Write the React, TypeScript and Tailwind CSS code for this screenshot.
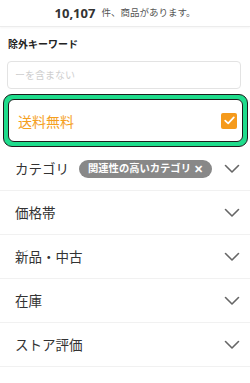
import React from 'react';

const rows = ['価格帯', '新品・中古', '在庫', 'ストア評価'];

function Chevron() {
  return (
    <svg width="16" height="10" viewBox="0 0 16 10" className="shrink-0">
      <path d="M1.5 1.5 L8 8 L14.5 1.5" fill="none" stroke="#666" strokeWidth="1.6" strokeLinecap="round" strokeLinejoin="round" />
    </svg>
  );
}

export default function App() {
  return (
    <div
      className="w-[250px] h-[383px] bg-white overflow-hidden text-[#333]"
      style={{ fontFamily: '"Noto Sans CJK JP", "Noto Sans", sans-serif' }}
    >
      {/* result count header */}
      <div className="h-[27px] flex items-center justify-center gap-[6px] border-b border-[#ececec] shadow-[0_1px_2px_rgba(0,0,0,0.04)]">
        <span className="text-[13px] font-bold text-[#333] leading-none" style={{ fontFamily: '"Noto Sans", sans-serif' }}>10,107</span>
        <span className="text-[9.5px] text-[#555] leading-none">件、商品があります。</span>
      </div>

      {/* exclude keyword */}
      <div className="px-[8px] pt-[12px]">
        <div className="text-[10px] font-bold leading-none text-[#222]">除外キーワード</div>
        <div className="mt-[12px] h-[28px] -ml-px w-[234px] border border-[#e3e3e3] rounded-[4px] flex items-center px-[7px]">
          <span className="text-[10px] text-[#cfcfcf] leading-none">ーを含まない</span>
        </div>
      </div>

      {/* free shipping highlighted */}
      <div className="mt-[5px] ml-[3px] w-[245px] h-[53px] border border-[#1c1c1c] bg-[#1fdc8c] rounded-[9px] p-[4px]">
        <div className="h-full border border-[#1c1c1c] rounded-[6px] bg-white flex items-center justify-between pl-[9px] pr-[5px]">
          <span className="text-[14px] text-[#f5a01e] leading-none">送料無料</span>
          <span className="w-[16px] h-[16px] rounded-[2px] bg-[#f59a1b] flex items-center justify-center">
            <svg width="11" height="9" viewBox="0 0 11 9">
              <path d="M1.2 4.6 L4.2 7.4 L9.8 1.4" fill="none" stroke="#fff" strokeWidth="1.7" strokeLinecap="round" strokeLinejoin="round" />
            </svg>
          </span>
        </div>
      </div>

      {/* category */}
      <div className="h-[44px] flex items-center pl-[15px] pr-[10px] border-b border-[#f1f1f1]">
        <span className="text-[13.5px] leading-none">カテゴリ</span>
        <span className="ml-[10px] h-[18px] px-[9px] rounded-full bg-[#888] flex items-center gap-[3px] text-white">
          <span className="text-[10.3px] font-bold leading-none">関連性の高いカテゴリ</span>
          <span className="text-[11px] font-bold leading-none">✕</span>
        </span>
        <span className="ml-auto">
          <Chevron />
        </span>
      </div>

      {rows.map((r) => (
        <div key={r} className="h-[44px] flex items-center justify-between pl-[15px] pr-[10px] border-b border-[#f1f1f1]">
          <span className="text-[13.5px] leading-none">{r}</span>
          <Chevron />
        </div>
      ))}
    </div>
  );
}
